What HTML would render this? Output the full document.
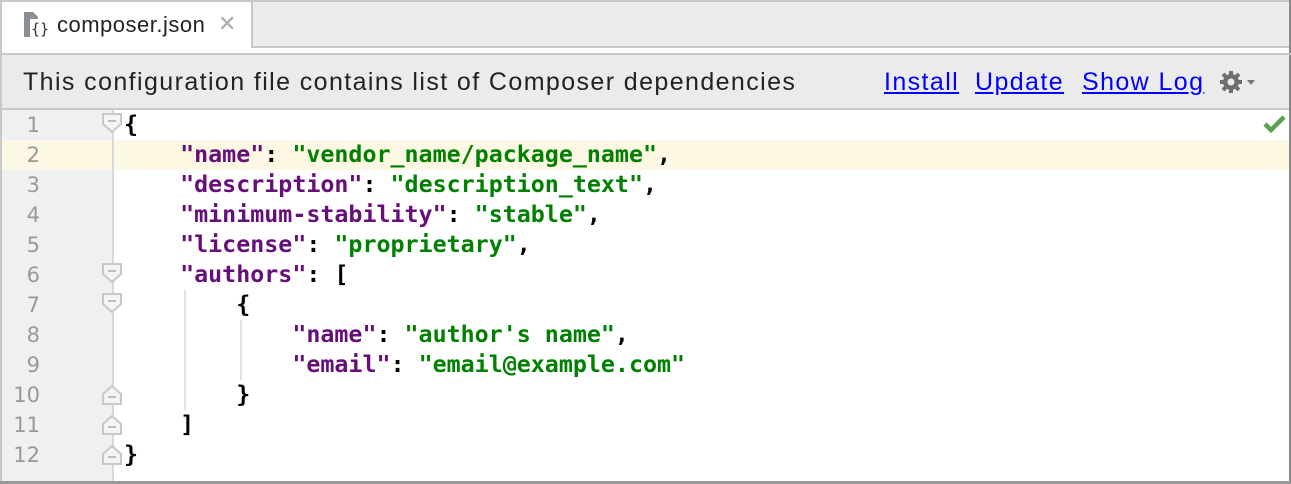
<!DOCTYPE html>
<html><head><style>
body{margin:0;width:1291px;height:484px;overflow:hidden;background:#fff;font-family:"Liberation Sans",sans-serif;position:relative}
.abs{position:absolute}
.code{font-family:"DejaVu Sans Mono",monospace;font-weight:bold;font-size:23.3px;white-space:pre;color:#000}
.k{color:#660e7a}.s{color:#008000}
.ln{position:absolute;left:0;width:40px;text-align:right;font-family:"DejaVu Sans",sans-serif;font-size:21px;color:#999;line-height:30px}
a{color:#0000ff;text-decoration:underline}
.bar{font-size:25px;letter-spacing:1.4px;color:#222;top:68px}
</style></head><body>
<div class="abs" style="left:0;top:0;width:1291px;height:2px;background:#c8c8c8"></div>
<div class="abs" style="left:251px;top:2px;width:1040px;height:44px;background:#ececec;border-left:2px solid #c8c8c8;border-bottom:2px solid #c8c8c8"></div>
<div class="abs" style="left:0;top:0;width:2px;height:484px;background:#c8c8c8"></div>
<div class="abs" style="left:1289px;top:0;width:2px;height:484px;background:#888"></div>
<svg class="abs" style="left:22px;top:9px" width="30" height="30" viewBox="0 0 30 30">
<path d="M2 3h9l5 5v20H2z" fill="#8a8f96"/><rect x="8" y="10" width="18" height="18" fill="#fff"/>
<text x="9" y="25" font-family="DejaVu Sans Mono" font-size="15" fill="#333">{}</text></svg>
<div class="abs" style="left:57px;top:12px;font-size:22px;letter-spacing:0.5px;color:#222">composer.json</div>
<div class="abs" style="left:218px;top:11px;font-size:22px;color:#aaa">✕</div>
<div class="abs" style="left:0;top:53px;width:1291px;height:2px;background:#c8c8c8"></div>
<div class="abs" style="left:2px;top:55px;width:1287px;height:53px;background:#ebebeb;border-bottom:2px solid #c8c8c8"></div>
<div class="abs bar" style="left:23px">This configuration file contains list of Composer dependencies</div>
<div class="abs bar" style="left:884px"><a>Install</a></div>
<div class="abs bar" style="left:975px"><a>Update</a></div>
<div class="abs bar" style="left:1082px"><a>Show Log</a></div>
<svg class="abs" style="left:1218px;top:69px" width="42" height="26" viewBox="0 0 42 26">
<g fill="#6e6e6e"><circle cx="13" cy="13" r="8"/>
<g stroke="#6e6e6e" stroke-width="4"><line x1="13" y1="2" x2="13" y2="24"/><line x1="2" y1="13" x2="24" y2="13"/><line x1="5" y1="5" x2="21" y2="21"/><line x1="21" y1="5" x2="5" y2="21"/></g></g>
<circle cx="13" cy="13" r="3.5" fill="#ebebeb"/><path d="M29 11h8l-4 5z" fill="#777"/></svg>
<div class="abs" style="left:2px;top:110px;width:111px;height:372px;background:#f0f0f0"></div>
<div class="abs" style="left:2px;top:140px;width:1287px;height:30px;background:#fdf8e3"></div>
<div class="abs" style="left:112px;top:110px;width:2px;height:372px;background:#d8d8d8"></div>
<div class="abs" style="left:0;top:481px;width:1291px;height:3px;background:#999"></div>
<svg class="abs" style="left:1262px;top:113px" width="26" height="22" viewBox="0 0 26 22"><path d="M3 11l6 6 13-13" stroke="#59a14f" stroke-width="4.5" fill="none"/></svg>
<div class="ln" style="top:110px">1<br>2<br>3<br>4<br>5<br>6<br>7<br>8<br>9<br>10<br>11<br>12</div>
<svg class="abs" style="left:100px;top:110px" width="26" height="372">
<g fill="#f4f4f4" stroke="#c8c8c8" stroke-width="2">
<path d="M3 4h18v10l-9 8l-9-8z"/><path d="M3 154h18v10l-9 8l-9-8z"/><path d="M3 184h18v10l-9 8l-9-8z"/>
<path d="M3 284l9-8l9 8v10h-18z"/><path d="M3 314l9-8l9 8v10h-18z"/><path d="M3 344l9-8l9 8v10h-18z"/></g>
<g stroke="#aaa" stroke-width="1.5"><line x1="8" y1="11" x2="16" y2="11"/><line x1="8" y1="161" x2="16" y2="161"/><line x1="8" y1="191" x2="16" y2="191"/><line x1="8" y1="287" x2="16" y2="287"/><line x1="8" y1="317" x2="16" y2="317"/><line x1="8" y1="347" x2="16" y2="347"/></g></svg>
<div class="abs" style="left:184px;top:290px;width:2px;height:120px;background:#e2e2e2"></div>
<div class="abs" style="left:240px;top:320px;width:2px;height:60px;background:#e2e2e2"></div>
<div class="abs code" style="left:124px;top:110px;line-height:30px">{
    <span class="k">"name"</span>: <span class="s">"vendor_name/package_name"</span>,
    <span class="k">"description"</span>: <span class="s">"description_text"</span>,
    <span class="k">"minimum-stability"</span>: <span class="s">"stable"</span>,
    <span class="k">"license"</span>: <span class="s">"proprietary"</span>,
    <span class="k">"authors"</span>: [
        {
            <span class="k">"name"</span>: <span class="s">"author's name"</span>,
            <span class="k">"email"</span>: <span class="s">"email@example.com"</span>
        }
    ]
}</div>
</body></html>
